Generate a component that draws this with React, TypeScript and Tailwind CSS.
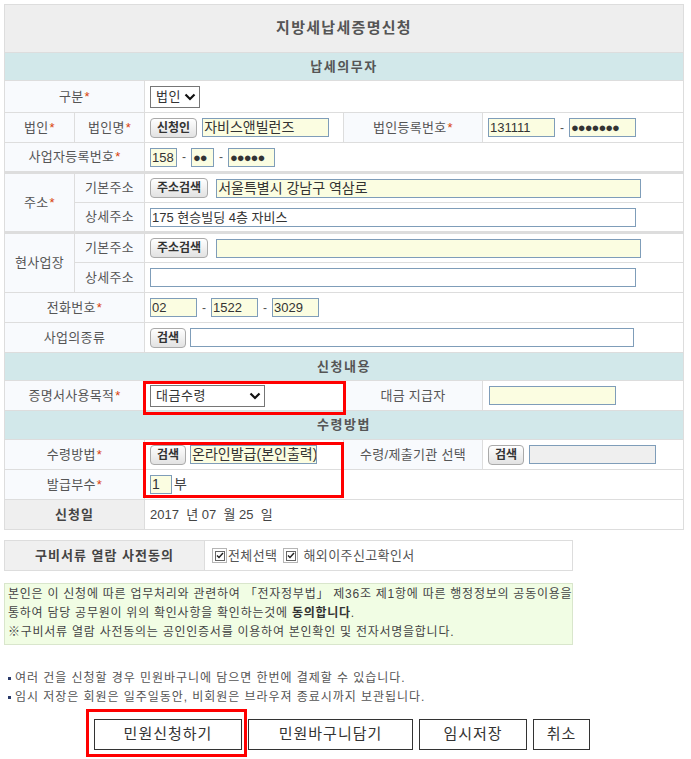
import React from 'react';

const Star = () => <span className="text-[#d8400c] ml-[1px]">*</span>;

function Label({ children, star, colSpan, rowSpan, className }: { children: React.ReactNode; star?: boolean; colSpan?: number; rowSpan?: number; className?: string }) {
    return (
        <td colSpan={colSpan} rowSpan={rowSpan} className={`bg-[#f8fafd] text-center text-[13px] tracking-[0.3px] text-[#555] border border-[#dddddd] h-[30px] p-0 ${className || ''}`}>
            {children}
            {star && <Star />}
        </td>
    );
}

function Val({ children, colSpan, className }: { children?: React.ReactNode; colSpan?: number; className?: string }) {
    return (
        <td colSpan={colSpan} className={`bg-white border border-[#dddddd] h-[30px] px-[5px] py-0 ${className || ''}`}>
            <div className="flex items-center">{children}</div>
        </td>
    );
}

function Input({ w, value, yellow, gray, className }: { w: string; value?: string; yellow?: boolean; gray?: boolean; className?: string }) {
    const bg = yellow ? 'bg-[#fbfde1]' : gray ? 'bg-[#efefef]' : 'bg-white';
    return (
        <div className={`${w} h-[19px] border border-[#7f9db9] ${bg} text-[13px] leading-[17px] text-[#333] px-[1px] whitespace-nowrap overflow-hidden ${className || ''}`}>
            {value}
        </div>
    );
}

function Btn({ children, className }: { children: React.ReactNode; className?: string }) {
    return (
        <div className={`h-[20px] px-[6px] rounded-[4px] border border-[#aaaaaa] bg-gradient-to-b from-white to-[#e2e2e2] text-[12px] font-bold text-[#333] leading-[18px] whitespace-nowrap ${className || ''}`}>
            {children}
        </div>
    );
}

function Select({ w, value }: { w: string; value: string }) {
    return (
        <div className={`${w} h-[22px] border border-[#767676] bg-white flex items-center justify-between pl-[5px] pr-[3px] text-[13px] tracking-[0.5px] text-[#333]`}>
            <span>{value}</span>
            <svg width="12" height="8" viewBox="0 0 12 8">
                <path d="M1.5 1.5 L6 6 L10.5 1.5" fill="none" stroke="#111" strokeWidth="2.2" />
            </svg>
        </div>
    );
}

const Dash = () => <span className="mx-[5px] text-[12px] text-[#555]">-</span>;

function Check({ label, spaced }: { label: string; spaced?: boolean }) {
    return (
        <span className="inline-flex items-center mr-[6px]">
            <span className="w-[15px] h-[15px] border border-[#b5b5b5] bg-white flex items-center justify-center">
                <span className="w-[10px] h-[10px] border border-[#666] flex items-center justify-center">
                    <svg width="8" height="7" viewBox="0 0 8 7">
                        <path d="M1 3.5 L3 5.5 L7 1" fill="none" stroke="#222" strokeWidth="1.4" />
                    </svg>
                </span>
            </span>
            <span className={`${spaced ? 'ml-[5px]' : 'ml-[1px]'} text-[13px] tracking-[0.4px] text-[#555]`}>{label}</span>
        </span>
    );
}

function Section({ children, h }: { children: React.ReactNode; h: string }) {
    return (
        <tr>
            <td colSpan={5} className={`${h} bg-[#d2e8ea] text-center text-[13px] tracking-[1.5px] font-bold text-[#555] border border-[#dddddd]`}>
                {children}
            </td>
        </tr>
    );
}

export default function App() {
    return (
        <div className="relative w-[691px] h-[759px] bg-white font-['Liberation_Sans','Noto_Sans_CJK_KR',sans-serif] pt-[4px] pl-[4px]">
            <table className="w-[679px] border-collapse table-fixed border border-[#d8d8d8]">
                <colgroup>
                    <col className="w-[70px]" />
                    <col className="w-[70px]" />
                    <col className="w-[199px]" />
                    <col className="w-[139px]" />
                    <col className="w-[201px]" />
                </colgroup>
                <tbody>
                    <tr>
                        <td colSpan={5} className="h-[48px] bg-[#eeeeee] text-center text-[15px] tracking-[1.3px] font-bold text-[#555] border border-[#dddddd]">
                            지방세납세증명신청
                        </td>
                    </tr>
                    <Section h="h-[28px]">납세의무자</Section>
                    <tr>
                        <Label colSpan={2} star className="h-[32px]">구분</Label>
                        <Val colSpan={3}><Select w="w-[50px]" value="법인" /></Val>
                    </tr>
                    <tr>
                        <Label star>법인</Label>
                        <Label star>법인명</Label>
                        <Val>
                            <Btn>신청인</Btn>
                            <Input w="w-[127px]" yellow value="자비스앤빌런즈" className="ml-[5px] text-[14px]" />
                        </Val>
                        <Label star>법인등록번호</Label>
                        <Val>
                            <Input w="w-[67px]" yellow value="131111" />
                            <Dash />
                            <Input w="w-[67px]" yellow value="●●●●●●●" className="text-[9px] tracking-[-1px]" />
                        </Val>
                    </tr>
                    <tr>
                        <Label colSpan={2} star>사업자등록번호</Label>
                        <Val colSpan={3}>
                            <Input w="w-[27px]" yellow value="158" />
                            <Dash />
                            <Input w="w-[23px]" yellow value="●●" className="text-[9px] tracking-[-1px]" />
                            <Dash />
                            <Input w="w-[47px]" yellow value="●●●●●" className="text-[9px] tracking-[-1px]" />
                        </Val>
                    </tr>
                    <tr className="border-t-[3px] border-t-[#dddddd]">
                        <Label rowSpan={2} star>주소</Label>
                        <Label>기본주소</Label>
                        <Val colSpan={3}>
                            <Btn>주소검색</Btn>
                            <Input w="w-[425px]" yellow value="서울특별시 강남구 역삼로" className="ml-[8px] text-[14px]" />
                        </Val>
                    </tr>
                    <tr>
                        <Label>상세주소</Label>
                        <Val colSpan={3}>
                            <Input w="w-[486px]" value="175 현승빌딩 4층 자비스" />
                        </Val>
                    </tr>
                    <tr className="border-t-[3px] border-t-[#dddddd]">
                        <Label rowSpan={2}>현사업장</Label>
                        <Label>기본주소</Label>
                        <Val colSpan={3}>
                            <Btn>주소검색</Btn>
                            <Input w="w-[425px]" yellow className="ml-[8px]" />
                        </Val>
                    </tr>
                    <tr>
                        <Label>상세주소</Label>
                        <Val colSpan={3}>
                            <Input w="w-[486px]" />
                        </Val>
                    </tr>
                    <tr>
                        <Label colSpan={2} star>전화번호</Label>
                        <Val colSpan={3}>
                            <Input w="w-[47px]" yellow value="02" />
                            <Dash />
                            <Input w="w-[47px]" yellow value="1522" />
                            <Dash />
                            <Input w="w-[47px]" yellow value="3029" />
                        </Val>
                    </tr>
                    <tr>
                        <Label colSpan={2}>사업의종류</Label>
                        <Val colSpan={3}>
                            <Btn>검색</Btn>
                            <Input w="w-[444px]" className="ml-[4px]" />
                        </Val>
                    </tr>
                    <Section h="h-[28px]">신청내용</Section>
                    <tr>
                        <Label colSpan={2} star>증명서사용목적</Label>
                        <Val><Select w="w-[115px]" value="대금수령" /></Val>
                        <Label>대금 지급자</Label>
                        <Val><Input w="w-[127px]" yellow className="ml-[1px]" /></Val>
                    </tr>
                    <Section h="h-[29px]">수령방법</Section>
                    <tr>
                        <Label colSpan={2} star>수령방법</Label>
                        <Val>
                            <Btn>검색</Btn>
                            <Input w="w-[127px]" yellow value="온라인발급(본인출력)" className="ml-[4px] text-[14px]" />
                        </Val>
                        <Label>수령/제출기관 선택</Label>
                        <Val>
                            <Btn>검색</Btn>
                            <Input w="w-[127px]" gray className="ml-[5px]" />
                        </Val>
                    </tr>
                    <tr>
                        <Label colSpan={2} star>발급부수</Label>
                        <Val colSpan={3}>
                            <Input w="w-[22px]" yellow value="1" className="text-[14px]" />
                            <span className="ml-[2px] text-[14px] text-[#444]">부</span>
                        </Val>
                    </tr>
                    <tr>
                        <td colSpan={2} className="h-[30px] bg-[#efefef] text-center text-[13px] tracking-[1px] font-bold text-[#444] border border-[#dddddd]">
                            신청일
                        </td>
                        <Val colSpan={3}>
                            <span className="text-[13px] text-[#444] whitespace-pre">2017  년 07  월 25  일</span>
                        </Val>
                    </tr>
                </tbody>
            </table>

            <div className="mt-[10px] w-[569px] h-[31px] flex border border-[#dddddd]">
                <div className="w-[200px] bg-[#f0f0f0] border-r border-[#dddddd] flex items-center justify-center text-[13px] tracking-[1px] font-bold text-[#444]">
                    구비서류 열람 사전동의
                </div>
                <div className="flex-1 flex items-center pl-[7px]">
                    <Check label="전체선택" />
                    <Check label="해외이주신고확인서" spaced />
                </div>
            </div>

            <div className="mt-[12px] w-[569px] h-[62px] bg-[#f1fde4] border border-[#d9e6cc] px-[3px] pt-[1px] text-[12px] tracking-[0.75px] leading-[19px] text-[#444] whitespace-nowrap">
                <p>본인은 이 신청에 따른 업무처리와 관련하여 「전자정부법」 제36조 제1항에 따른 행정정보의 공동이용을</p>
                <p>통하여 담당 공무원이 위의 확인사항을 확인하는것에 <b className="text-[#333]">동의합니다</b>.</p>
                <p>※구비서류 열람 사전동의는 공인인증서를 이용하여 본인확인 및 전자서명을합니다.</p>
            </div>

            <ul className="mt-[24px] text-[12px] tracking-[0.95px] leading-[19px] text-[#555]">
                <li className="flex items-center"><span className="w-[3px] h-[3px] bg-[#2a3a6a] mr-[4px] ml-[4px]" />여러 건을 신청할 경우 민원바구니에 담으면 한번에 결제할 수 있습니다.</li>
                <li className="flex items-center"><span className="w-[3px] h-[3px] bg-[#2a3a6a] mr-[4px] ml-[4px]" />임시 저장은 회원은 일주일동안, 비회원은 브라우져 종료시까지 보관됩니다.</li>
            </ul>

            <div className="mt-[12px] flex pl-[90px] gap-[6px] text-[15px] tracking-[1px] text-[#333]">
                <div className="w-[148px] h-[31px] border border-[#333] flex items-center justify-center">민원신청하기</div>
                <div className="w-[165px] h-[31px] border border-[#333] flex items-center justify-center">민원바구니담기</div>
                <div className="w-[108px] h-[31px] border border-[#333] flex items-center justify-center">임시저장</div>
                <div className="w-[57px] h-[31px] border border-[#333] flex items-center justify-center">취소</div>
            </div>

            <div className="absolute left-[143px] top-[381px] w-[203px] h-[34px] border-[3px] border-[#ff0000]" />
            <div className="absolute left-[143px] top-[442px] w-[201px] h-[56px] border-[3px] border-[#ff0000]" />
            <div className="absolute left-[86px] top-[709px] w-[161px] h-[48px] border-[3px] border-[#ff0000]" />
        </div>
    );
}
